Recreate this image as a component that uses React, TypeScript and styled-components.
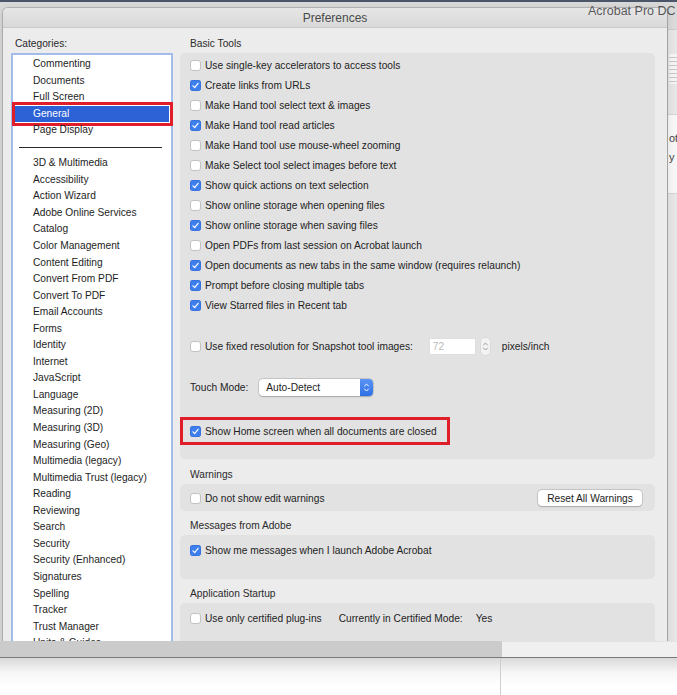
import React from "react";
import styled, { createGlobalStyle, css } from "styled-components";

const GlobalStyle = createGlobalStyle`
  html, body { margin: 0; padding: 0; background: #ffffff; }
  body { font-family: "Liberation Sans", Arial, sans-serif; -webkit-font-smoothing: antialiased; }
  * { box-sizing: border-box; }
`;

const FONT = 10.2;

const Desktop = styled.div`
  width: 677px;
  height: 695px;
  overflow: hidden;
  display: flex;
  flex-direction: column;
  background: #ffffff;
`;

const TopArea = styled.div`
  position: relative;
  height: 641px;
  flex: none;
  display: flex;
  align-items: flex-start;
  background: #d9d9d9;
  border-top: 2px solid #4b5568;
  overflow: hidden;
`;

const AppTitle = styled.div`
  position: absolute;
  z-index: 2;
  top: 2px;
  left: 588px;
  font-size: 12.5px;
  line-height: 14px;
  color: rgba(40, 40, 40, 0.75);
  white-space: nowrap;
`;

const PrefWindow = styled.div`
  position: relative;
  z-index: 1;
  margin: 6px 0 0 3px;
  width: 664px;
  height: 639px;
  flex: none;
  background: #ececec;
  border-radius: 5px 5px 0 0;
  box-shadow: 0 0 0 1px rgba(0, 0, 0, 0.16), 0 2px 8px rgba(0, 0, 0, 0.12);
  overflow: hidden;
  display: flex;
  flex-direction: column;
`;

const TitleBar = styled.div`
  height: 20px;
  flex: none;
  display: flex;
  align-items: center;
  justify-content: center;
  background: linear-gradient(#e6e6e6, #d9d9d9);
  border-bottom: 1px solid #c9c9c9;
  font-size: 12px;
  color: #4a4a4a;
`;

const Body = styled.div`
  display: grid;
  grid-template-columns: 162px 475px;
  column-gap: 7px;
  padding: 1px 0 0 8px;
  align-items: start;
`;

const Column = styled.div`
  display: flex;
  flex-direction: column;
`;

const SectionTitle = styled.div<{ $left?: number; $top?: number }>`
  height: 24px;
  padding: 8px 0 0 ${(p) => p.$left ?? 10}px;
  margin-top: ${(p) => p.$top ?? 0}px;
  line-height: 14px;
  font-size: ${FONT}px;
  color: #2a2a2a;
  white-space: nowrap;
`;

const CatList = styled.div`
  position: relative;
  background: #ffffff;
  border: 2px solid #a3bdea;
  border-bottom: none;
  padding-top: 1px;
  height: 620px;
`;

const CatItem = styled.div<{ $selected?: boolean }>`
  position: relative;
  height: 16.55px;
  line-height: 16.55px;
  padding-left: 20px;
  font-size: ${FONT}px;
  color: #1e1e1e;
  white-space: nowrap;
  ${(p) =>
    p.$selected &&
    css`
      margin: 0 2px;
      padding-left: 18px;
      background: #2c62d6;
      color: #ffffff;
    `}
`;

const CatSeparator = styled.div`
  height: 16.55px;
  display: flex;
  align-items: center;
  padding: 0 9px 0 6px;
  &::after {
    content: "";
    flex: 1;
    height: 1px;
    background: #2a2a2a;
  }
`;

const SelectMark = styled.div`
  position: absolute;
  left: -3px;
  right: -4px;
  top: -4px;
  bottom: -4px;
  border: 3px solid #e01e2a;
  pointer-events: none;
`;

const Group = styled.div<{ $pt?: number; $pb?: number; $h?: number }>`
  background: #e2e2e2;
  border-radius: 5px;
  padding: ${(p) => p.$pt ?? 0}px 0 ${(p) => p.$pb ?? 0}px 0;
  ${(p) => p.$h && css`height: ${p.$h}px;`}
  display: flex;
  flex-direction: column;
`;

const Row = styled.div<{ $h?: number; $mt?: number; $pl?: number }>`
  height: ${(p) => p.$h ?? 20}px;
  margin-top: ${(p) => p.$mt ?? 0}px;
  padding-left: ${(p) => p.$pl ?? 10}px;
  padding-right: 13px;
  display: flex;
  align-items: center;
  font-size: ${FONT}px;
  color: #222222;
  white-space: nowrap;
`;

const Label = styled.span<{ $ml?: number }>`
  margin-left: ${(p) => p.$ml ?? 4}px;
`;

const Box = styled.span<{ $checked?: boolean }>`
  width: 11px;
  height: 11px;
  flex: none;
  border-radius: 3px;
  display: flex;
  align-items: center;
  justify-content: center;
  ${(p) =>
    p.$checked
      ? css`
          background: #3d7fee;
          box-shadow: inset 0 0 0 0.5px rgba(0, 40, 140, 0.3);
        `
      : css`
          background: #ffffff;
          box-shadow: inset 0 0 0 1px #c2c2c2;
        `}
`;

const Checkbox: React.FC<{ checked?: boolean }> = ({ checked }) => (
  <Box $checked={checked}>
    {checked && (
      <svg width="11" height="11" viewBox="0 0 11 11">
        <path d="M3 5.8 L4.7 7.6 L8.1 3.3" fill="none" stroke="#ffffff" strokeWidth="1.2" strokeLinecap="round" strokeLinejoin="round" />
      </svg>
    )}
  </Box>
);

const NumInput = styled.div`
  margin-left: 16px;
  width: 47px;
  height: 17px;
  background: #ffffff;
  box-shadow: inset 0 0 0 1px #dedede;
  padding-left: 4px;
  line-height: 17px;
  font-size: ${FONT}px;
  color: #b9b9b9;
`;

const Stepper = styled.div`
  margin-left: 5px;
  width: 9px;
  height: 17px;
  border-radius: 4px;
  background: #f3f3f3;
  box-shadow: 0 0 0 0.5px rgba(0, 0, 0, 0.08);
  display: flex;
  align-items: center;
  justify-content: center;
`;

const SelectBox = styled.div`
  margin-left: 11px;
  width: 114px;
  height: 17px;
  border-radius: 4px;
  background: #ffffff;
  box-shadow: 0 0 0 0.5px rgba(0, 0, 0, 0.2), 0 0.5px 1.5px rgba(0, 0, 0, 0.18);
  display: flex;
  align-items: center;
  overflow: hidden;
`;

const SelectText = styled.span`
  flex: 1;
  padding-left: 7px;
  font-size: ${FONT}px;
  color: #222222;
`;

const SelectCap = styled.span`
  width: 13px;
  height: 17px;
  background: linear-gradient(#5a95f4, #2f6fe6);
  display: flex;
  align-items: center;
  justify-content: center;
`;

const UpDown: React.FC<{ color: string }> = ({ color }) => (
  <svg width="7" height="11" viewBox="0 0 7 11">
    <path d="M1.5 4 L3.5 2 L5.5 4 M1.5 7 L3.5 9 L5.5 7" fill="none" stroke={color} strokeWidth="1" strokeLinecap="round" strokeLinejoin="round" />
  </svg>
);

const HomeMark = styled.div`
  margin-top: 21px;
  width: 270px;
  height: 28px;
  border: 3px solid #e01e2a;
  display: flex;
  align-items: center;
`;

const Spacer = styled.div`
  flex: 1;
`;

const PushButton = styled.div`
  width: 104px;
  height: 16px;
  border-radius: 4px;
  background: #ffffff;
  box-shadow: 0 0 0 0.5px rgba(0, 0, 0, 0.2), 0 0.5px 1.5px rgba(0, 0, 0, 0.18);
  display: flex;
  align-items: center;
  justify-content: center;
  font-size: ${FONT}px;
  color: #222222;
`;

const SideStrip = styled.div`
  flex: 1;
  align-self: stretch;
  display: flex;
  flex-direction: column;
  margin-top: 6px;
  background: #e6e6e6;
  border-left: 1px solid #cfcfcf;
`;

const SideHead = styled.div`
  height: 22px;
  background: #dadada;
  border-bottom: 1px solid #cdcdcd;
`;

const SideThumb = styled.div`
  margin: 24px 0 0 1px;
  height: 30px;
  background: repeating-linear-gradient(#f4f4f4 0 3px, #c9c9c9 3px 4px);
`;

const SideBand = styled.div`
  margin-top: 30px;
  height: 80px;
  background: #f7f7f7;
  border-top: 1px solid #d5d5d5;
  border-bottom: 1px solid #d5d5d5;
  padding: 14px 0 0 1px;
  font-size: 11px;
  line-height: 19px;
  color: #444444;
  overflow: hidden;
  white-space: nowrap;
`;

const Strip = styled.div`
  height: 17px;
  flex: none;
  display: flex;
  border-bottom: 1.5px solid #7a7a7a;
`;

const StripDark = styled.div`
  width: 502px;
  background: #cbcbcb;
`;

const StripLight = styled.div`
  flex: 1;
  background: #f0f0f0;
  border-top: 1px solid #e2e2e2;
`;

const BottomArea = styled.div`
  flex: 1;
  display: flex;
  background: linear-gradient(#d9d9d9, #f6f6f6 14px, #ffffff 28px);
`;

const BottomLeft = styled.div`
  width: 501px;
  border-right: 1px solid #cfcfcf;
`;

const basic: [boolean, string][] = [
  [false, "Use single-key accelerators to access tools"],
  [true, "Create links from URLs"],
  [false, "Make Hand tool select text & images"],
  [true, "Make Hand tool read articles"],
  [false, "Make Hand tool use mouse-wheel zooming"],
  [false, "Make Select tool select images before text"],
  [true, "Show quick actions on text selection"],
  [false, "Show online storage when opening files"],
  [true, "Show online storage when saving files"],
  [false, "Open PDFs from last session on Acrobat launch"],
  [true, "Open documents as new tabs in the same window (requires relaunch)"],
  [true, "Prompt before closing multiple tabs"],
  [true, "View Starred files in Recent tab"],
];

const topCats = ["Commenting", "Documents", "Full Screen", "General", "Page Display"];
const cats = [
  "3D & Multimedia",
  "Accessibility",
  "Action Wizard",
  "Adobe Online Services",
  "Catalog",
  "Color Management",
  "Content Editing",
  "Convert From PDF",
  "Convert To PDF",
  "Email Accounts",
  "Forms",
  "Identity",
  "Internet",
  "JavaScript",
  "Language",
  "Measuring (2D)",
  "Measuring (3D)",
  "Measuring (Geo)",
  "Multimedia (legacy)",
  "Multimedia Trust (legacy)",
  "Reading",
  "Reviewing",
  "Search",
  "Security",
  "Security (Enhanced)",
  "Signatures",
  "Spelling",
  "Tracker",
  "Trust Manager",
  "Units & Guides",
];

export default function App() {
  return (
    <>
      <GlobalStyle />
      <Desktop>
        <TopArea>
          <AppTitle>Acrobat Pro DC (</AppTitle>
          <PrefWindow>
            <TitleBar>Preferences</TitleBar>
            <Body>
              <Column>
                <SectionTitle $left={4}>Categories:</SectionTitle>
                <CatList>
                  {topCats.map((c) => (
                    <CatItem key={c} $selected={c === "General"}>
                      {c}
                      {c === "General" && <SelectMark />}
                    </CatItem>
                  ))}
                  <CatSeparator />
                  {cats.map((c) => (
                    <CatItem key={c}>{c}</CatItem>
                  ))}
                </CatList>
              </Column>
              <Column>
                <SectionTitle>Basic Tools</SectionTitle>
                <Group $pt={2} $pb={14}>
                  {basic.map(([on, text]) => (
                    <Row key={text}>
                      <Checkbox checked={on} />
                      <Label>{text}</Label>
                    </Row>
                  ))}
                  <Row $h={17} $mt={23}>
                    <Checkbox />
                    <Label>Use fixed resolution for Snapshot tool images:</Label>
                    <NumInput>72</NumInput>
                    <Stepper>
                      <UpDown color="#9a9a9a" />
                    </Stepper>
                    <Label $ml={12}>pixels/inch</Label>
                  </Row>
                  <Row $h={17} $mt={24}>
                    <span>Touch Mode:</span>
                    <SelectBox>
                      <SelectText>Auto-Detect</SelectText>
                      <SelectCap>
                        <UpDown color="#ffffff" />
                      </SelectCap>
                    </SelectBox>
                  </Row>
                  <HomeMark>
                    <Row $pl={7}>
                      <Checkbox checked />
                      <Label>Show Home screen when all documents are closed</Label>
                    </Row>
                  </HomeMark>
                </Group>

                <SectionTitle $top={1}>Warnings</SectionTitle>
                <Group $pt={4} $pb={3}>
                  <Row>
                    <Checkbox />
                    <Label>Do not show edit warnings</Label>
                    <Spacer />
                    <PushButton>Reset All Warnings</PushButton>
                  </Row>
                </Group>

                <SectionTitle>Messages from Adobe</SectionTitle>
                <Group $pt={5} $pb={19}>
                  <Row>
                    <Checkbox checked />
                    <Label>Show me messages when I launch Adobe Acrobat</Label>
                  </Row>
                </Group>

                <SectionTitle>Application Startup</SectionTitle>
                <Group $pt={5} $h={80}>
                  <Row>
                    <Checkbox />
                    <Label>Use only certified plug-ins</Label>
                    <Label $ml={17}>Currently in Certified Mode:</Label>
                    <Label $ml={13}>Yes</Label>
                  </Row>
                </Group>
              </Column>
            </Body>
          </PrefWindow>
          <SideStrip>
            <SideHead />
            <SideThumb />
            <SideBand>
              ot
              <br />y c
            </SideBand>
          </SideStrip>
        </TopArea>
        <Strip>
          <StripDark />
          <StripLight />
        </Strip>
        <BottomArea>
          <BottomLeft />
        </BottomArea>
      </Desktop>
    </>
  );
}
